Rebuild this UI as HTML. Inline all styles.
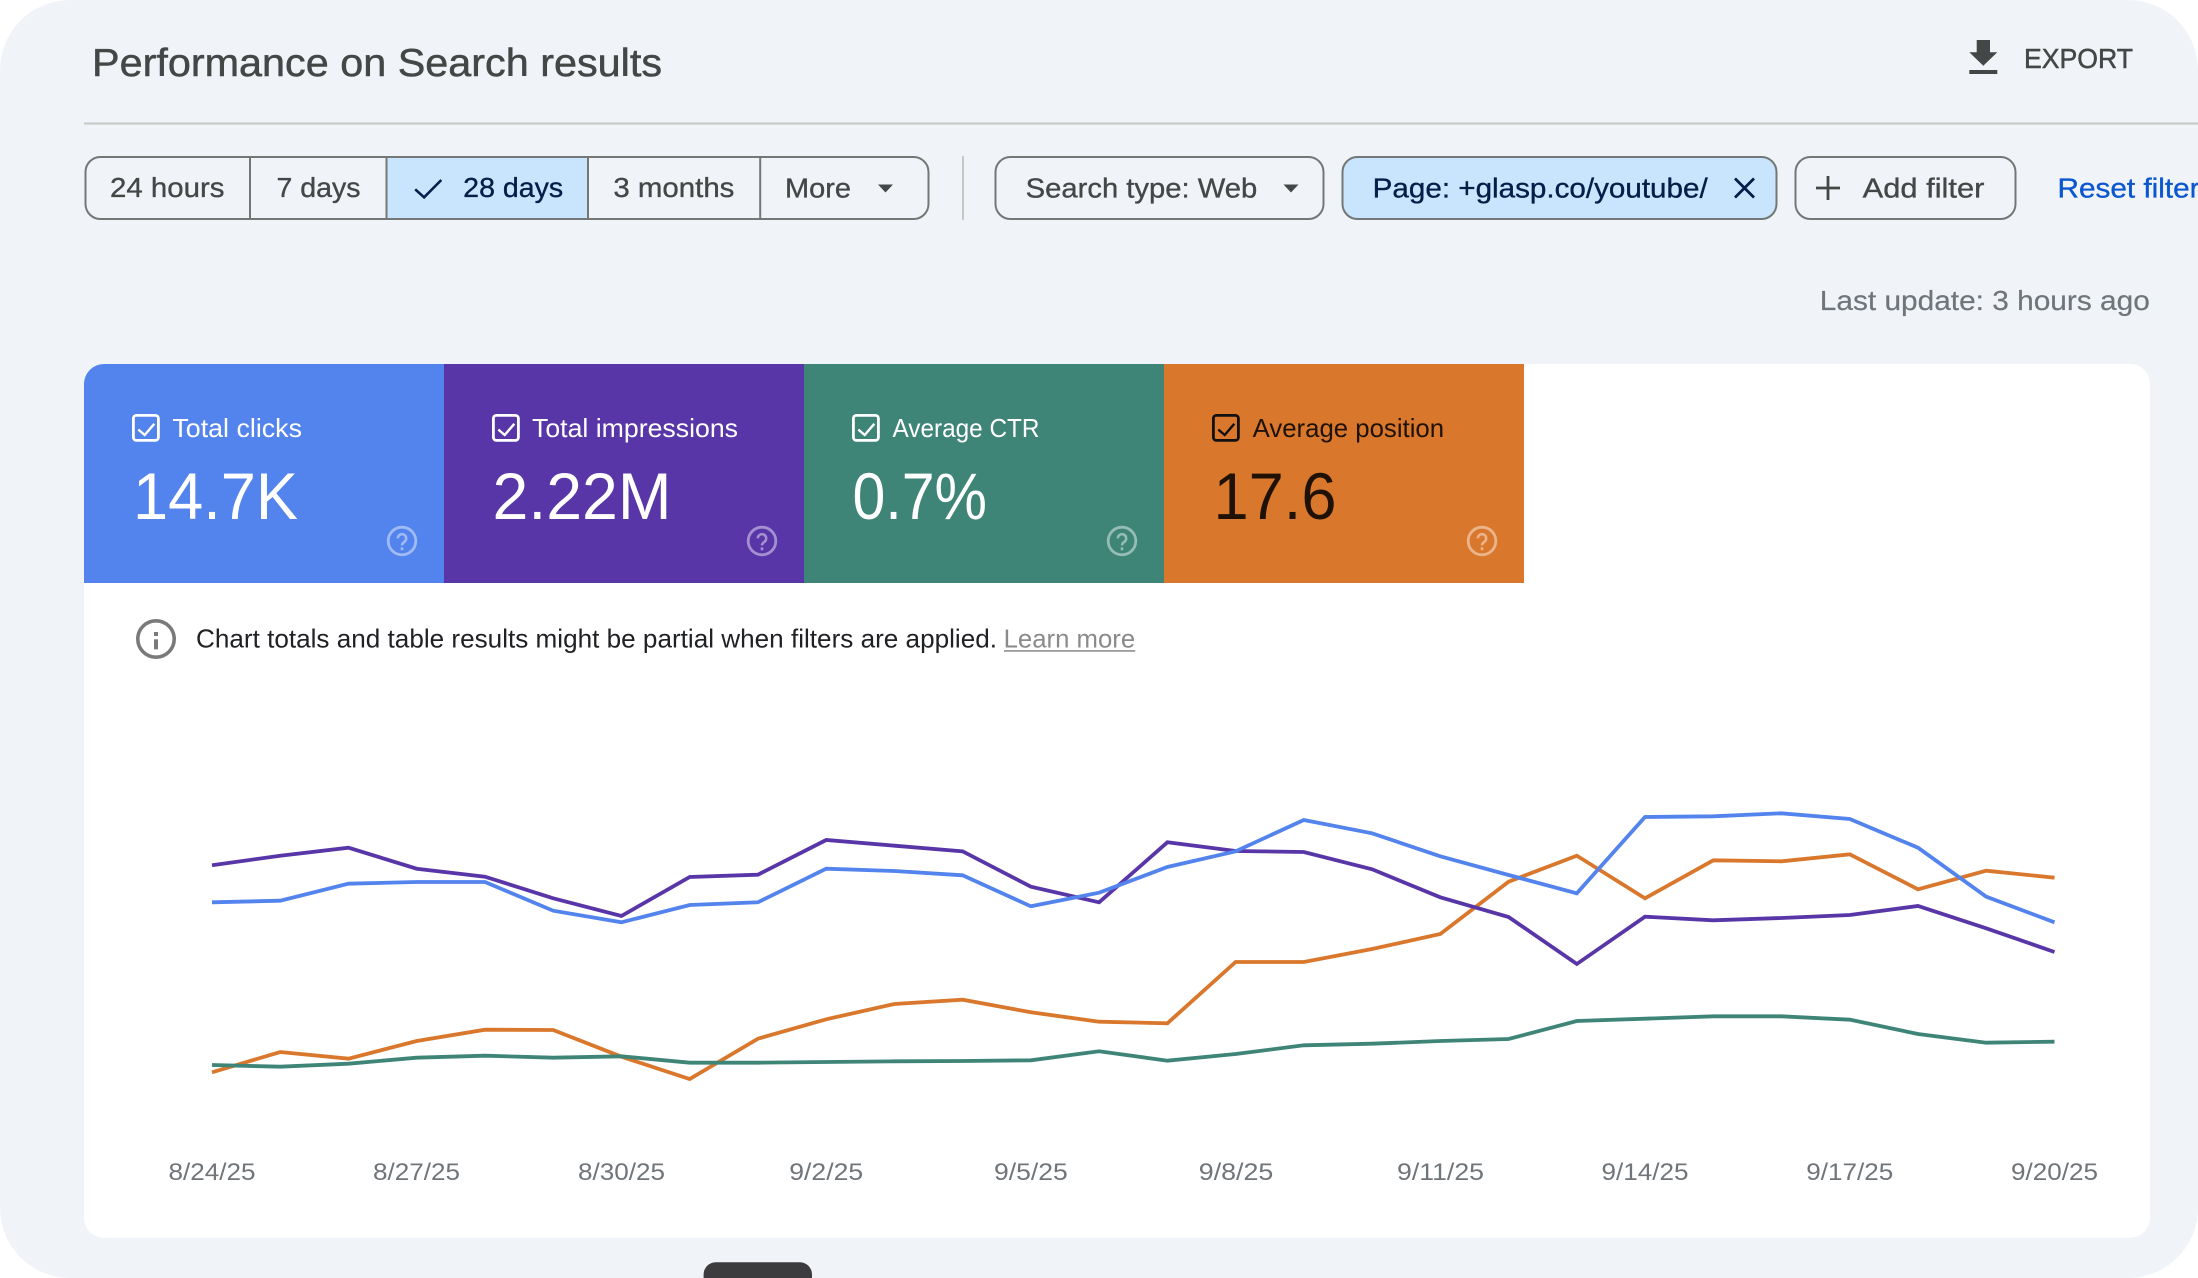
<!DOCTYPE html>
<html lang="en">
<head>
<meta charset="utf-8">
<title>Performance on Search results</title>
<style>
html,body{margin:0;padding:0;background:#fff;width:2198px;height:1278px;overflow:hidden}
svg{display:block}
text{font-family:"Liberation Sans",Arial,sans-serif}
</style>
</head>
<body>
<svg width="2198" height="1278" viewBox="0 0 2198 1278" xmlns="http://www.w3.org/2000/svg">
<rect width="2198" height="1278" fill="#fff"/>
<rect width="2198" height="1278" rx="70" ry="70" fill="#f0f4f9"/>

<text x="92" y="76" font-size="39" fill="#444746" stroke="#444746" stroke-width=".5" textLength="570" lengthAdjust="spacingAndGlyphs">Performance on Search results</text>

<path d="M1976.7 40H1990V52.3H1997.3L1983.3 65.7L1969.3 52.3H1976.7z" fill="#444746"/>
<rect x="1969.3" y="70" width="28" height="4" fill="#444746"/>
<text x="2024" y="68" font-size="27.5" fill="#444746" stroke="#444746" stroke-width=".5" textLength="109" lengthAdjust="spacingAndGlyphs">EXPORT</text>

<rect x="84" y="122.5" width="2114" height="2" fill="#c4c7c5"/>

<rect x="386.5" y="157" width="201.5" height="61.5" fill="#c8e5fd"/>
<rect x="85.5" y="157" width="843" height="62" rx="15" ry="15" fill="none" stroke="#747775" stroke-width="2"/>
<g stroke="#747775" stroke-width="2">
<line x1="250" y1="157" x2="250" y2="219"/>
<line x1="386.5" y1="157" x2="386.5" y2="219"/>
<line x1="588" y1="157" x2="588" y2="219"/>
<line x1="760.2" y1="157" x2="760.2" y2="219"/>
</g>
<g font-size="28" fill="#444746" stroke="#444746" stroke-width=".35">
<text x="110" y="197" textLength="114.5" lengthAdjust="spacingAndGlyphs">24 hours</text>
<text x="276.5" y="197" textLength="84" lengthAdjust="spacingAndGlyphs">7 days</text>
<text x="463.2" y="197" fill="#041e49" stroke="#041e49" textLength="100" lengthAdjust="spacingAndGlyphs">28 days</text>
<text x="613.4" y="197" textLength="121" lengthAdjust="spacingAndGlyphs">3 months</text>
<text x="785" y="197.5" textLength="66" lengthAdjust="spacingAndGlyphs">More</text>
</g>
<path d="M415.2 189.3L424.1 197.3L441.3 180" fill="none" stroke="#041e49" stroke-width="2.6"/>
<path d="M878 184.5h15l-7.5 8z" fill="#444746"/>

<rect x="962" y="156" width="2" height="64" fill="#c4c7c5"/>

<rect x="995.5" y="157" width="328" height="62" rx="15" ry="15" fill="none" stroke="#747775" stroke-width="2"/>
<text x="1025.7" y="197.5" font-size="28" fill="#444746" stroke="#444746" stroke-width=".35" textLength="231.5" lengthAdjust="spacingAndGlyphs">Search type: Web</text>
<path d="M1283.5 184.5h15l-7.5 8z" fill="#444746"/>

<rect x="1342.5" y="157" width="434" height="62" rx="15" ry="15" fill="#c8e5fd" stroke="#747775" stroke-width="2"/>
<text x="1372.7" y="197.5" font-size="28" fill="#041e49" stroke="#041e49" stroke-width=".35" textLength="335" lengthAdjust="spacingAndGlyphs">Page: +glasp.co/youtube/</text>
<path d="M1735 178.5L1754 197.5M1754 178.5L1735 197.5" fill="none" stroke="#041e49" stroke-width="2.8"/>

<rect x="1795.5" y="157" width="220" height="62" rx="15" ry="15" fill="none" stroke="#747775" stroke-width="2"/>
<path d="M1816 188H1840M1828 176V200" fill="none" stroke="#444746" stroke-width="2.8"/>
<text x="1862.7" y="197.5" font-size="28" fill="#444746" stroke="#444746" stroke-width=".35" textLength="121.7" lengthAdjust="spacingAndGlyphs">Add filter</text>

<text x="2057.5" y="197.5" font-size="28" fill="#0b57d0" stroke="#0b57d0" stroke-width=".35" textLength="142" lengthAdjust="spacingAndGlyphs">Reset filter</text>

<text x="1819.8" y="310" font-size="28" fill="#70757a" stroke="#70757a" stroke-width=".2" textLength="330" lengthAdjust="spacingAndGlyphs">Last update: 3 hours ago</text>

<rect x="84" y="364" width="2066" height="873.7" rx="20" ry="20" fill="#fff"/>

<path d="M84 583V384a20 20 0 0 1 20-20H444.2V583z" fill="#5383ec"/>
<rect x="444" y="364" width="360" height="219" fill="#5936a8"/>
<rect x="804" y="364" width="360" height="219" fill="#3e8578"/>
<rect x="1164" y="364" width="360" height="219" fill="#d9782d"/>

<g fill="none" stroke="#fff" stroke-width="2.8">
<rect x="133.4" y="415.4" width="25" height="25" rx="3"/>
<rect x="493.4" y="415.4" width="25" height="25" rx="3"/>
<rect x="853.4" y="415.4" width="25" height="25" rx="3"/>
<rect x="1213.4" y="415.4" width="25" height="25" rx="3" stroke="#111"/>
</g>
<g fill="none" stroke="#fff" stroke-width="2.4">
<path d="M138.3 429.6L144.7 435L154.3 423.8"/>
<path d="M498.3 429.6L504.7 435L514.3 423.8"/>
<path d="M858.3 429.6L864.7 435L874.3 423.8"/>
<path d="M1218.3 429.6L1224.7 435L1234.3 423.8" stroke="#111"/>
</g>

<g font-size="26">
<text x="172.4" y="437" fill="#fff" textLength="129.6" lengthAdjust="spacingAndGlyphs">Total clicks</text>
<text x="532" y="437" fill="#fff" textLength="206" lengthAdjust="spacingAndGlyphs">Total impressions</text>
<text x="892.5" y="437" fill="#fff" textLength="147" lengthAdjust="spacingAndGlyphs">Average CTR</text>
<text x="1252.6" y="437" fill="#1f1205" textLength="191.5" lengthAdjust="spacingAndGlyphs">Average position</text>
</g>
<g font-size="66" fill="#fff">
<text x="133" y="519" textLength="165" lengthAdjust="spacingAndGlyphs">14.7K</text>
<text x="492.5" y="519" textLength="179" lengthAdjust="spacingAndGlyphs">2.22M</text>
<text x="852.5" y="519" textLength="134.5" lengthAdjust="spacingAndGlyphs">0.7%</text>
<text x="1213.5" y="519" fill="#1f1205" textLength="123" lengthAdjust="spacingAndGlyphs">17.6</text>
</g>

<g fill="none" stroke="#fff" stroke-opacity=".45" stroke-width="2.8">
<g transform="translate(402,541)"><circle r="13.8"/><path d="M-4.2 -2.6a4.2 4.2 0 1 1 6.6 3.4c-1.6 1.1 -2.4 1.8 -2.4 3.6" stroke-width="2.5"/><path d="M0 6.4V9.2" stroke-width="2.6"/></g>
<g transform="translate(762,541)"><circle r="13.8"/><path d="M-4.2 -2.6a4.2 4.2 0 1 1 6.6 3.4c-1.6 1.1 -2.4 1.8 -2.4 3.6" stroke-width="2.5"/><path d="M0 6.4V9.2" stroke-width="2.6"/></g>
<g transform="translate(1122,541)"><circle r="13.8"/><path d="M-4.2 -2.6a4.2 4.2 0 1 1 6.6 3.4c-1.6 1.1 -2.4 1.8 -2.4 3.6" stroke-width="2.5"/><path d="M0 6.4V9.2" stroke-width="2.6"/></g>
<g transform="translate(1482,541)"><circle r="13.8"/><path d="M-4.2 -2.6a4.2 4.2 0 1 1 6.6 3.4c-1.6 1.1 -2.4 1.8 -2.4 3.6" stroke-width="2.5"/><path d="M0 6.4V9.2" stroke-width="2.6"/></g>
</g>

<circle cx="156" cy="639" r="18.2" fill="none" stroke="#7a7a7a" stroke-width="3.6"/>
<rect x="154" y="639.3" width="4" height="10" fill="#7a7a7a"/>
<rect x="154" y="632" width="4" height="4" fill="#7a7a7a"/>
<text x="196" y="647.3" font-size="26" fill="#202124" textLength="801" lengthAdjust="spacingAndGlyphs">Chart totals and table results might be partial when filters are applied.</text>
<text x="1003.6" y="647.3" font-size="26" fill="#8a8a8a" textLength="131.6" lengthAdjust="spacingAndGlyphs">Learn more</text>
<rect x="1004" y="650" width="131.2" height="1.8" fill="#9a9a9a"/>

<g fill="none" stroke-width="3.8" stroke-linejoin="miter">
<polyline stroke="#d9782d" points="212,1072.3 280.2,1052 348.5,1058.7 416.7,1041 485,1029.7 553.2,1030 621.4,1056.7 689.7,1079 757.9,1038.7 826.2,1019.3 894.4,1004 962.6,999.7 1030.9,1012.3 1099.1,1021.7 1167.4,1023.3 1235.6,962 1303.8,962 1372.1,949 1440.3,934 1508.6,881.7 1576.8,855.7 1645,898.3 1713.3,860.3 1781.5,861.3 1849.8,854.3 1918,889.3 1986.2,870.7 2054.5,877.7"/>
<polyline stroke="#3e8578" points="212,1065 280.2,1066.7 348.5,1063.7 416.7,1057.7 485,1055.7 553.2,1057.7 621.4,1056.3 689.7,1062.7 757.9,1062.7 826.2,1062 894.4,1061.3 962.6,1061 1030.9,1060.3 1099.1,1051.3 1167.4,1060.7 1235.6,1054 1303.8,1045.3 1372.1,1043.7 1440.3,1041 1508.6,1039 1576.8,1021 1645,1018.7 1713.3,1016.3 1781.5,1016.3 1849.8,1019.7 1918,1034 1986.2,1042.7 2054.5,1041.7"/>
<polyline stroke="#5936a8" points="212,865.3 280.2,855.7 348.5,847.7 416.7,868.7 485,876.7 553.2,898.3 621.4,916 689.7,877 757.9,874.7 826.2,840 894.4,845.7 962.6,851.3 1030.9,886.7 1099.1,902.3 1167.4,842.3 1235.6,851 1303.8,852 1372.1,869.3 1440.3,897.3 1508.6,917 1576.8,964 1645,916.7 1713.3,920.3 1781.5,918 1849.8,915 1918,906 1986.2,928.3 2054.5,952"/>
<polyline stroke="#5383ec" points="212,902.3 280.2,900.7 348.5,883.7 416.7,882 485,882 553.2,910.7 621.4,922.3 689.7,905 757.9,902.3 826.2,868.7 894.4,871 962.6,875.3 1030.9,906.3 1099.1,892.7 1167.4,867 1235.6,851.3 1303.8,820 1372.1,833.3 1440.3,856.3 1508.6,875 1576.8,893.3 1645,817 1713.3,816.3 1781.5,813.3 1849.8,819 1918,847.7 1986.2,896.7 2054.5,922.3"/>
</g>

<g font-size="24" fill="#70757a">
<text x="168.5" y="1180" textLength="87" lengthAdjust="spacingAndGlyphs">8/24/25</text>
<text x="373" y="1180" textLength="87" lengthAdjust="spacingAndGlyphs">8/27/25</text>
<text x="578" y="1180" textLength="87" lengthAdjust="spacingAndGlyphs">8/30/25</text>
<text x="789.3" y="1180" textLength="73.8" lengthAdjust="spacingAndGlyphs">9/2/25</text>
<text x="994" y="1180" textLength="73.8" lengthAdjust="spacingAndGlyphs">9/5/25</text>
<text x="1198.8" y="1180" textLength="74.5" lengthAdjust="spacingAndGlyphs">9/8/25</text>
<text x="1397" y="1180" textLength="87" lengthAdjust="spacingAndGlyphs">9/11/25</text>
<text x="1601.5" y="1180" textLength="87" lengthAdjust="spacingAndGlyphs">9/14/25</text>
<text x="1806.3" y="1180" textLength="87" lengthAdjust="spacingAndGlyphs">9/17/25</text>
<text x="2011" y="1180" textLength="87" lengthAdjust="spacingAndGlyphs">9/20/25</text>
</g>

<rect x="703.6" y="1262.3" width="108.4" height="40" rx="12" ry="12" fill="#3c3c3e"/>
</svg>
</body>
</html>
